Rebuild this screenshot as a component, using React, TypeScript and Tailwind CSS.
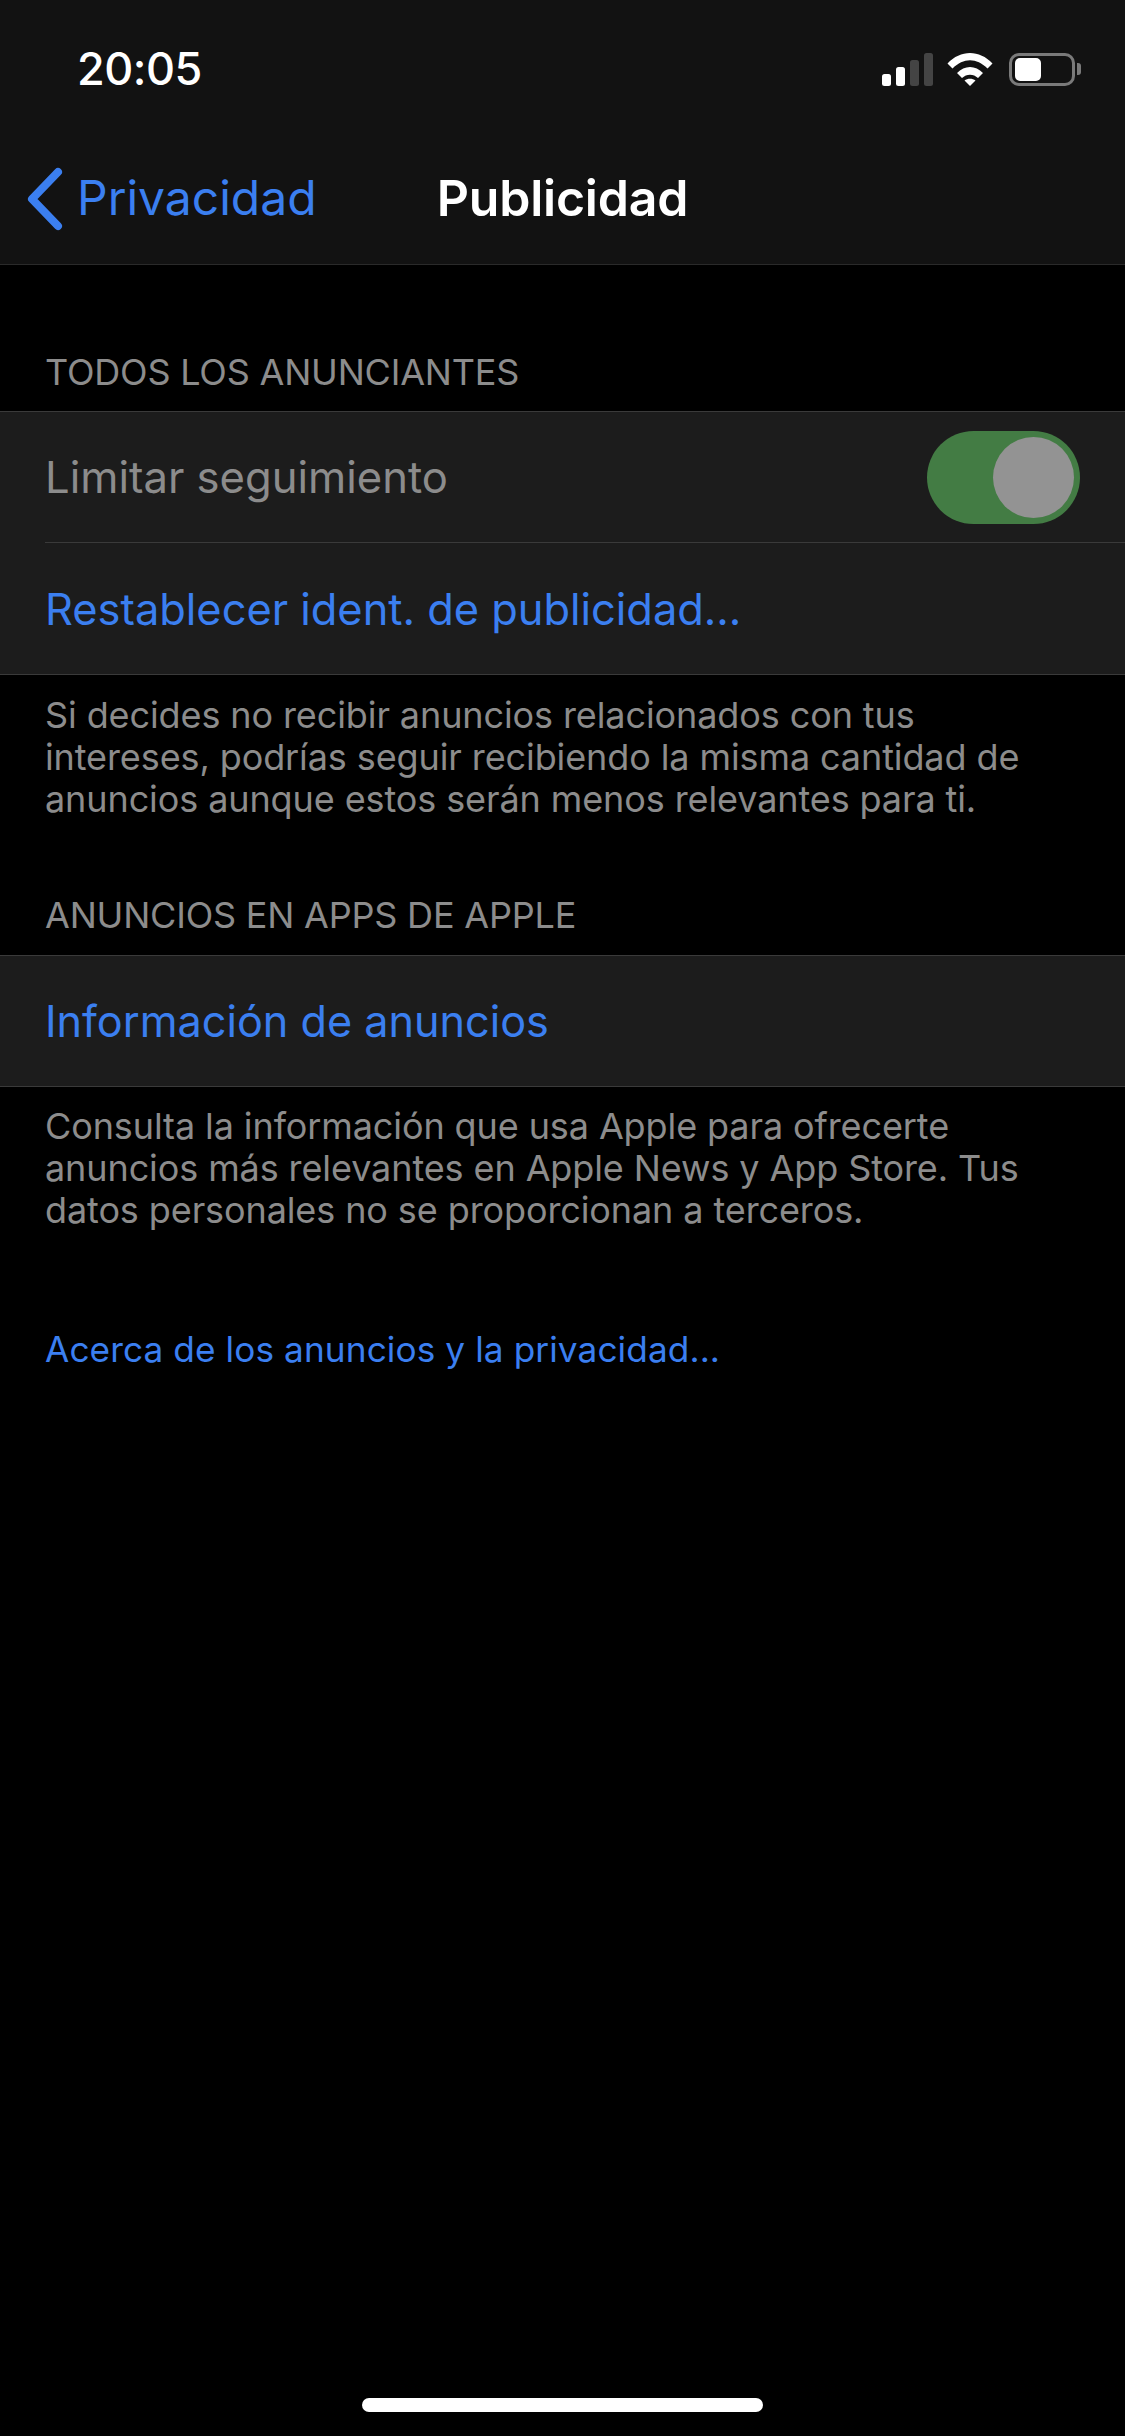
import React from 'react';

const StatusIcons = () => (
    <div className="flex items-center">
        <svg width="52" height="33" viewBox="0 0 52 33">
            <rect x="0" y="21" width="9" height="12" rx="2.5" fill="#fff" />
            <rect x="14" y="14" width="9" height="19" rx="2.5" fill="#fff" />
            <rect x="28" y="7" width="9" height="26" rx="2.5" fill="#444" />
            <rect x="42" y="0" width="9" height="33" rx="2.5" fill="#444" />
        </svg>
        <svg width="46" height="33" viewBox="0 0 46 33" className="ml-[13px]">
            <path d="M0.5 10.5C13.5 -3.5 32.5 -3.5 45.5 10.5L40.5 15.5C29.5 4.5 16.5 4.5 5.5 15.5Z" fill="#fff" />
            <path d="M10 20C17.5 12 28.5 12 36 20L31 25C26.5 20.5 19.5 20.5 15 25Z" fill="#fff" />
            <path d="M23 33L17.5 27.5C20.5 25 25.5 25 28.5 27.5Z" fill="#fff" />
        </svg>
        <div className="flex items-center ml-[16px]">
            <div className="w-[66px] h-[33px] rounded-[10px] border-[3px] border-[#7a7a7a] px-[3px] py-[2px]">
                <div className="w-[26px] h-[23px] rounded-[5px] bg-white" />
            </div>
            <div className="w-[4px] h-[12px] rounded-r-[3px] bg-[#7a7a7a] ml-[2px]" />
        </div>
    </div>
);

const Header = ({ children }: { children: React.ReactNode }) => (
    <div className="px-[45px] text-[36px] leading-[42px] text-[#8c8c8c] tracking-[-0.2px]">{children}</div>
);

const Footer = ({ children }: { children: React.ReactNode }) => (
    <div className="px-[45px] text-[36px] leading-[42px] text-[#8c8c8c] tracking-[-0.1px]">{children}</div>
);

export default function App() {
    return (
        <div className="w-[1125px] h-[2436px] bg-black flex flex-col font-['Inter','Liberation_Sans',sans-serif] overflow-hidden">
            <div className="h-[265px] bg-[#121212] border-b border-[#2a2a2a] flex flex-col flex-shrink-0">
                <div className="h-[132px] flex items-center justify-between pl-[77px] pr-[44px] pt-[6px]">
                    <span className="text-[45px] font-medium text-white tracking-[-0.5px]">20:05</span>
                    <StatusIcons />
                </div>
                <div className="relative h-[132px] flex items-center justify-center">
                    <div className="absolute left-[26px] top-0 h-full flex items-center gap-[13px]">
                        <svg width="38" height="64" viewBox="0 0 38 64" className="mt-[2px]">
                            <path d="M32 5L6 32L32 59" fill="none" stroke="#3b7ff0" strokeWidth="8" strokeLinecap="round" strokeLinejoin="round" />
                        </svg>
                        <span className="text-[48px] text-[#3b7ff0] tracking-[0px]">Privacidad</span>
                    </div>
                    <span className="text-[50px] font-semibold text-white tracking-[-0.2px]">Publicidad</span>
                </div>
            </div>

            <div className="pt-[86px]">
                <Header>TODOS LOS ANUNCIANTES</Header>
            </div>

            <div className="mt-[18px] bg-[#1c1c1c] border-y border-[#3a3a3a]">
                <div className="h-[131px] flex items-center justify-between pl-[45px] pr-[45px] relative">
                    <span className="text-[43.6px] text-[#8c8c8c]">Limitar seguimiento</span>
                    <div className="w-[153px] h-[93px] rounded-full bg-[#437c44] flex items-center justify-end pr-[6px]">
                        <div className="w-[81px] h-[81px] rounded-full bg-[#939393]" />
                    </div>
                    <div className="absolute left-[45px] right-0 bottom-0 h-px bg-[#3a3a3a]" />
                </div>
                <div className="h-[131px] flex items-center pl-[45px] pt-[2px]">
                    <span className="text-[43.4px] text-[#3b7ff0]">Restablecer ident. de publicidad...</span>
                </div>
            </div>

            <div className="pt-[19px]">
                <Footer>
                    Si decides no recibir anuncios relacionados con tus
                    <br />
                    intereses, podrías seguir recibiendo la misma cantidad de
                    <br />
                    anuncios aunque estos serán menos relevantes para ti.
                </Footer>
            </div>

            <div className="pt-[74px]">
                <Header>ANUNCIOS EN APPS DE APPLE</Header>
            </div>

            <div className="mt-[19px] bg-[#1c1c1c] border-y border-[#3a3a3a] h-[132px] flex items-center pl-[45px]">
                <span className="text-[43.2px] text-[#3b7ff0]">Información de anuncios</span>
            </div>

            <div className="pt-[18px]">
                <Footer>
                    Consulta la información que usa Apple para ofrecerte
                    <br />
                    anuncios más relevantes en Apple News y App Store. Tus
                    <br />
                    datos personales no se proporcionan a terceros.
                </Footer>
            </div>

            <div className="pt-[97px] px-[45px] text-[35.2px] leading-[42px] text-[#3b7ff0] tracking-[0.1px]">
                Acerca de los anuncios y la privacidad...
            </div>

            <div className="mt-auto pb-[24px] flex justify-center">
                <div className="w-[401px] h-[14px] rounded-full bg-white" />
            </div>
        </div>
    );
}
